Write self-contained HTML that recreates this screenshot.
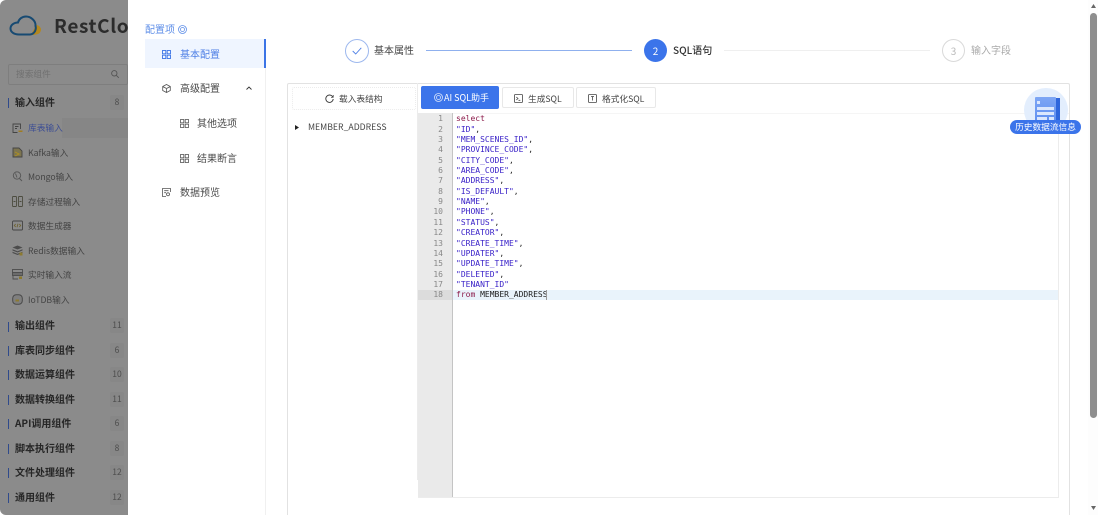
<!DOCTYPE html>
<html lang="zh"><head><meta charset="utf-8"><title>RestCloud</title>
<style>
html,body{margin:0;padding:0;width:1098px;height:515px;overflow:hidden;background:#fff}
#root{position:absolute;left:0;top:0;width:1098px;height:515px;overflow:hidden;filter:blur(.35px);font-family:"Noto Sans CJK SC","Liberation Sans",sans-serif;color:#444}
.a{position:absolute;white-space:nowrap}
svg{position:absolute;overflow:visible}
#side{position:absolute;left:0;top:0;width:128px;height:515px;background:#8b8b8b;overflow:hidden;border-radius:6px 0 0 6px}
.gh{position:absolute;left:15px;font-size:10px;font-weight:700;color:#262626;line-height:14px;white-space:nowrap}
.bar{position:absolute;left:8px;width:1px;height:10px;background:#2f4a8c}
.bd{position:absolute;left:110px;width:14px;height:15px;background:#878787;color:#4d4d4d;font-size:8.5px;line-height:15px;text-align:center;border-radius:2px}
.it{position:absolute;left:28px;font-size:8.7px;color:#444;line-height:12px;white-space:nowrap}
.si{left:12px}
.mi{position:absolute;font-size:10px;color:#4a4a4a;line-height:14px;white-space:nowrap}
.gi{position:absolute;width:9px;height:9px}
.cd{position:absolute;left:456px;font-family:"DejaVu Sans Mono","Liberation Mono",monospace;font-size:8px;line-height:10.35px;color:#1d1d1d;white-space:pre}
.s{color:#3a22c8}.k{color:#8b1a4a}
.ln{position:absolute;left:419px;width:24px;text-align:right;font-family:"DejaVu Sans Mono","Liberation Mono",monospace;font-size:8px;line-height:10.35px;color:#888;white-space:pre}
.btn{position:absolute;top:87px;height:21px;background:#fff;border:1px solid #e8e8e8;border-radius:2px;box-sizing:border-box;font-size:8.7px;line-height:22px;color:#444}
</style></head><body><div id="root">

<div id="side">
<svg style="left:9px;top:14px" width="34" height="24" viewBox="0 0 34 24"><path d="M22 21 C28 21 32 20 32 15 C31 12 29 11 27 11 L22 21Z" fill="#b4881e"/><path d="M10 20.500 H21 C26 20 27.500 15 26.500 12 C27 7 22 2.500 17 2.500 C13 2.500 10 5 9 8.500 C5 8.500 1.500 11 1.500 14.500 C1.500 18 5 20.500 10 20.500Z" fill="none" stroke="#174a72" stroke-width="2"/></svg>
<div class="a" style="left:54px;top:13px;font-size:19px;font-weight:700;color:#2c2c2c;line-height:26px;letter-spacing:.6px">RestCloud</div>

<div style="position:absolute;left:8px;top:64px;height:21px;width:120px;border:1px solid #7e7e7e;box-sizing:border-box;border-radius:2px"></div>
<div class="a" style="left:16px;top:68px;font-size:8.7px;color:#707070;line-height:12px">搜索组件</div>
<svg style="left:111px;top:70px" width="8" height="8" viewBox="0 0 8 8"><circle cx="3.300" cy="3.300" r="2.700" fill="none" stroke="#555" stroke-width=".9"/><path d="M5.300 5.300 L7.800 7.800" stroke="#555" stroke-width=".9"/></svg>

<div class="bar" style="top:98px"></div><div class="gh" style="top:95px">输入组件</div><div class="bd" style="top:95px">8</div>

<div style="position:absolute;left:62px;top:118px;width:66px;height:20px;background:#868686"></div>
<svg class="si" style="top:123px" width="11" height="11" viewBox="0 0 11 11" fill="none" stroke="#444" stroke-width=".9"><path d="M8.500 6 V1 H1 V9.500 H5.500 M3 3.500 H6.500 M3 5.500 H5"/><path d="M6.500 8.300 H10.500" stroke="#a07c20" stroke-width="1.500"/></svg>
<div class="it" style="top:122px;color:#3e4f94">库表输入</div>
<svg class="si" style="top:147px" width="11" height="11" viewBox="0 0 11 11" fill="none" stroke="#444" stroke-width=".9"><path d="M1 1 H7 L10 4 V10 H1Z" fill="#7d7550"/><path d="M3 5 L7 7 L3 9" stroke="#b09020"/></svg>
<div class="it" style="top:147px">Kafka输入</div>
<svg class="si" style="top:171px" width="11" height="11" viewBox="0 0 11 11" fill="none" stroke="#555" stroke-width=".9"><circle cx="5" cy="4.500" r="3.700"/><path d="M7.500 7.500 L10 10 M3.500 2.500 L5 6.500"/></svg>
<div class="it" style="top:171px">Mongo输入</div>
<svg class="si" style="top:196px" width="11" height="11" viewBox="0 0 11 11" fill="none" stroke="#4d4d40" stroke-width=".9"><rect x=".5" y=".5" width="4" height="10" rx=".6"/><rect x="6.500" y=".5" width="4" height="10" rx=".6"/><path d="M1.500 5.500 H3.500 M7.500 5.500 H9.500"/></svg>
<div class="it" style="top:196px">存储过程输入</div>
<svg class="si" style="top:220px" width="11" height="11" viewBox="0 0 11 11" fill="none" stroke="#444" stroke-width=".9"><rect x=".5" y="1" width="10" height="9" rx="1"/><path d="M3.700 4 L2.300 5.500 L3.700 7 M7.300 4 L8.700 5.500 L7.300 7 M6 3.700 L5 7.300" stroke="#6e6230"/></svg>
<div class="it" style="top:220px">数据生成器</div>
<svg class="si" style="top:245px" width="11" height="11" viewBox="0 0 11 11" fill="#4c4c4c"><path d="M5.500 .5 L10.500 2.500 L5.500 4.500 L.5 2.500Z M.5 4.300 L5.500 6.300 L10.500 4.300 V5.500 L5.500 7.500 L.5 5.500Z M.5 6.800 L5.500 8.800 L10.500 6.800 V8 L5.500 10 L.5 8Z"/><rect x="7.500" y="7.500" width="3" height="3" fill="#8c7a30"/></svg>
<div class="it" style="top:245px">Redis数据输入</div>
<svg class="si" style="top:269px" width="11" height="11" viewBox="0 0 11 11" fill="none" stroke="#4d4d4d" stroke-width=".9"><rect x=".5" y=".5" width="10" height="3"/><rect x=".5" y="3.500" width="10" height="3" fill="#6b6b6b"/><path d="M1 6.500 V10 H6"/><rect x="7" y="7.500" width="3" height="2.500" fill="#8c7a30" stroke="none"/></svg>
<div class="it" style="top:269px">实时输入流</div>
<svg class="si" style="top:294px" width="11" height="11" viewBox="0 0 11 11" fill="none" stroke="#4a4a4a" stroke-width="1"><rect x=".7" y=".7" width="9.600" height="9.600" rx="3.500" fill="#7f7f7f"/><path d="M3.500 5.500 H7 V7.500 H3.500Z" fill="#8c7a30" stroke="none"/></svg>
<div class="it" style="top:294px">IoTDB输入</div>

<div class="bar" style="top:322px"></div><div class="gh" style="top:318px">输出组件</div><div class="bd" style="top:318px">11</div>
<div class="bar" style="top:346px"></div><div class="gh" style="top:343px">库表同步组件</div><div class="bd" style="top:343px">6</div>
<div class="bar" style="top:370px"></div><div class="gh" style="top:367px">数据运算组件</div><div class="bd" style="top:367px">10</div>
<div class="bar" style="top:395px"></div><div class="gh" style="top:392px">数据转换组件</div><div class="bd" style="top:392px">11</div>
<div class="bar" style="top:419px"></div><div class="gh" style="top:416px">API调用组件</div><div class="bd" style="top:416px">6</div>
<div class="bar" style="top:444px"></div><div class="gh" style="top:441px">脚本执行组件</div><div class="bd" style="top:441px">8</div>
<div class="bar" style="top:468px"></div><div class="gh" style="top:465px">文件处理组件</div><div class="bd" style="top:465px">12</div>
<div class="bar" style="top:493px"></div><div class="gh" style="top:490px">通用组件</div><div class="bd" style="top:490px">12</div>
</div>

<!-- config nav -->
<div class="a" style="left:145px;top:22px;font-size:10px;color:#5f8fe8;line-height:14px">配置项</div>
<svg style="left:178px;top:25px" width="9" height="9" viewBox="0 0 9 9"><circle cx="4.500" cy="4.500" r="4" fill="none" stroke="#5f8fe8" stroke-width=".8"/><circle cx="4.500" cy="4.500" r="2" fill="none" stroke="#5f8fe8" stroke-width=".8"/></svg>
<div style="position:absolute;left:145px;top:39px;width:120px;height:29px;background:#eff5ff"></div>
<div style="position:absolute;left:264px;top:39px;width:2px;height:29px;background:#3b74e6"></div>
<div style="position:absolute;left:265px;top:68px;width:1px;height:447px;background:#f0f0f0"></div>

<svg class="gi" style="left:162px;top:50px" viewBox="0 0 9 9" fill="none" stroke="#3b74e6" stroke-width=".9"><rect x=".5" y=".5" width="3.300" height="3.300"/><rect x="5.200" y=".5" width="3.300" height="3.300"/><rect x=".5" y="5.200" width="3.300" height="3.300"/><rect x="5.200" y="5.200" width="3.300" height="3.300"/></svg>
<div class="mi" style="left:180px;top:47px;color:#4f80e6">基本配置</div>

<svg class="gi" style="left:162px;top:84px" viewBox="0 0 9 9" fill="none" stroke="#555" stroke-width=".8"><path d="M4.500 .5 L8.300 2.500 V6.500 L4.500 8.500 L.7 6.500 V2.500Z M.7 2.500 L4.500 4.500 L8.300 2.500 M4.500 4.500 V8.500"/></svg>
<div class="mi" style="left:180px;top:81px">高级配置</div>
<svg style="left:246px;top:86px" width="6" height="4" viewBox="0 0 6 4"><path d="M.5 3.500 L3 1 L5.500 3.500" fill="none" stroke="#333" stroke-width=".9"/></svg>

<svg class="gi" style="left:180px;top:119px" viewBox="0 0 9 9" fill="none" stroke="#555" stroke-width=".8"><rect x=".5" y=".5" width="3.300" height="3.300"/><rect x="5.200" y=".5" width="3.300" height="3.300"/><rect x=".5" y="5.200" width="3.300" height="3.300"/><rect x="5.200" y="5.200" width="3.300" height="3.300"/></svg>
<div class="mi" style="left:197px;top:116px">其他选项</div>
<svg class="gi" style="left:180px;top:154px" viewBox="0 0 9 9" fill="none" stroke="#555" stroke-width=".8"><rect x=".5" y=".5" width="3.300" height="3.300"/><rect x="5.200" y=".5" width="3.300" height="3.300"/><rect x=".5" y="5.200" width="3.300" height="3.300"/><rect x="5.200" y="5.200" width="3.300" height="3.300"/></svg>
<div class="mi" style="left:197px;top:151px">结果断言</div>
<svg class="gi" style="left:162px;top:188px" viewBox="0 0 9 9" fill="none" stroke="#555" stroke-width=".8"><path d="M8.500 4 V.5 H.5 V8.500 H4 M2.200 2.700 H6.500 M2.200 4.700 H4"/><circle cx="6" cy="6.300" r="1.500"/></svg>
<div class="mi" style="left:180px;top:185px">数据预览</div>

<!-- steps -->
<div style="position:absolute;left:345px;top:39px;width:24px;height:24px;box-sizing:border-box;border:1px solid #9db8ee;border-radius:50%"></div>
<svg style="left:352px;top:47px" width="10" height="8" viewBox="0 0 10 8"><path d="M.7 4 L3.700 7 L9.300 .8" fill="none" stroke="#4f80e6" stroke-width=".9"/></svg>
<div class="a" style="left:374px;top:43px;font-size:10px;color:#444;line-height:14px">基本属性</div>
<div style="position:absolute;left:426px;top:50px;width:206px;height:1px;background:#8fb0ee"></div>
<div style="position:absolute;left:644px;top:39px;width:23px;height:23px;border-radius:50%;background:#3b74ea;color:#fff;font-size:10px;line-height:23px;text-align:center">2</div>
<div class="a" style="left:673px;top:43px;font-size:10px;font-weight:500;color:#333;line-height:14px">SQL语句</div>
<div style="position:absolute;left:724px;top:50px;width:206px;height:1px;background:#efefef"></div>
<div style="position:absolute;left:942px;top:39px;width:23px;height:23px;box-sizing:border-box;border:1px solid #d9d9d9;border-radius:50%;color:#bbb;font-size:10px;line-height:21px;text-align:center">3</div>
<div class="a" style="left:971px;top:43px;font-size:10px;color:#aaa;line-height:14px">输入字段</div>

<!-- panel -->
<div style="position:absolute;left:287px;top:83px;width:783px;height:432px;box-sizing:border-box;border:1px solid #e2e2e2;border-bottom:0;border-radius:2px 2px 0 0"></div>
<div style="position:absolute;left:417px;top:113px;width:652px;height:1px;background:#f5f5f5"></div>
<div style="position:absolute;left:292px;top:87px;width:124px;height:23px;box-sizing:border-box;border:1px dotted #ececec;border-radius:2px"></div>
<svg style="left:325px;top:94px" width="9" height="9" viewBox="0 0 9 9"><path d="M7.800 3 A3.700 3.700 0 1 0 8.200 5" fill="none" stroke="#333" stroke-width=".9"/><path d="M8.200 1 V3.300 H6" fill="none" stroke="#333" stroke-width=".7"/></svg>
<div class="a" style="left:339px;top:93px;font-size:8.7px;color:#444;line-height:12px">载入表结构</div>
<svg style="left:295px;top:125px" width="4" height="5" viewBox="0 0 4 5"><path d="M0 0 L4 2.500 L0 5Z" fill="#222"/></svg>
<div class="a" style="left:308px;top:121px;font-size:8.7px;color:#444;line-height:12px">MEMBER_ADDRESS</div>
<div style="position:absolute;left:417px;top:83px;width:1px;height:397px;background:#ececec"></div>

<div style="position:absolute;left:421px;top:86px;width:78px;height:23px;background:#3b74ea;border-radius:2px;color:#fff;font-size:9px;line-height:24px"><span style="position:absolute;left:23px;white-space:nowrap">AI SQL助手</span></div>
<svg style="left:434px;top:93px" width="9" height="9" viewBox="0 0 9 9"><circle cx="4.500" cy="4.500" r="4" fill="none" stroke="#d6e3fb" stroke-width=".8"/><circle cx="4.500" cy="4.500" r="2" fill="none" stroke="#d6e3fb" stroke-width=".8"/></svg>
<div class="btn" style="left:502px;width:72px"><span style="position:absolute;left:25px;white-space:nowrap">生成SQL</span></div>
<svg style="left:514px;top:94px" width="9" height="9" viewBox="0 0 9 9" fill="none" stroke="#444" stroke-width=".8"><rect x=".5" y=".5" width="8" height="8" rx=".8"/><path d="M2.300 3 L4 4.500 L2.300 6 M4.500 6.300 H6.300"/></svg>
<div class="btn" style="left:576px;width:80px"><span style="position:absolute;left:25px;white-space:nowrap">格式化SQL</span></div>
<svg style="left:588px;top:94px" width="9" height="9" viewBox="0 0 9 9" fill="none" stroke="#444" stroke-width=".8"><rect x=".5" y=".5" width="8" height="8" rx=".8"/><path d="M3 2.500 H6 M4.500 2.500 V6.500"/></svg>

<!-- editor -->
<div style="position:absolute;left:418px;top:113px;width:641px;height:385px;box-sizing:border-box;border-bottom:1px solid #ececec;border-right:1px solid #ececec"></div>
<div style="position:absolute;left:418px;top:113px;width:35px;height:384px;box-sizing:border-box;background:#eaeaea;border-right:1px solid #c4c4c4"></div>
<div style="position:absolute;left:453px;top:290px;width:605px;height:10px;background:#e9f3fb"></div>
<div style="position:absolute;left:418px;top:290px;width:34px;height:10px;background:#dcdcdc"></div>
<div class="ln" style="top:114.4px">1
2
3
4
5
6
7
8
9
10
11
12
13
14
15
16
17
18</div>
<div class="cd" style="top:114.4px"><span class="k">select</span>
<span class="s">"ID"</span>,
<span class="s">"MEM_SCENES_ID"</span>,
<span class="s">"PROVINCE_CODE"</span>,
<span class="s">"CITY_CODE"</span>,
<span class="s">"AREA_CODE"</span>,
<span class="s">"ADDRESS"</span>,
<span class="s">"IS_DEFAULT"</span>,
<span class="s">"NAME"</span>,
<span class="s">"PHONE"</span>,
<span class="s">"STATUS"</span>,
<span class="s">"CREATOR"</span>,
<span class="s">"CREATE_TIME"</span>,
<span class="s">"UPDATER"</span>,
<span class="s">"UPDATE_TIME"</span>,
<span class="s">"DELETED"</span>,
<span class="s">"TENANT_ID"</span>
<span class="k">from</span> MEMBER_ADDRESS</div>
<div style="position:absolute;left:546px;top:290px;width:1px;height:10px;background:#999"></div>

<!-- floating -->
<div style="position:absolute;left:1024px;top:88px;width:44px;height:44px;border-radius:50%;background:#e3eefd"></div>
<div style="position:absolute;left:1035px;top:97px;width:21px;height:28px;background:linear-gradient(#7ea6f4,#5d8df0);border-radius:1px"></div>
<div style="position:absolute;left:1056px;top:98px;width:4px;height:26px;background:#2f66dc"></div>
<div style="position:absolute;left:1037px;top:101px;width:3px;height:3px;background:#dbe7fd"></div>
<div style="position:absolute;left:1037px;top:107px;width:17px;height:3px;background:#dbe7fd"></div>
<div style="position:absolute;left:1037px;top:112px;width:17px;height:3px;background:#dbe7fd"></div>
<div style="position:absolute;left:1037px;top:117px;width:10px;height:3px;background:#dbe7fd"></div>
<div style="position:absolute;left:1049px;top:117px;width:5px;height:3px;background:#dbe7fd"></div>
<div style="position:absolute;left:1010px;top:120px;width:71px;height:14px;border-radius:7px;background:#3b74ea;color:#fff;font-size:8.7px;line-height:14px;text-align:center;white-space:nowrap">历史数据流信息</div>

<!-- scrollbar -->
<div style="position:absolute;left:1088px;top:0;width:10px;height:515px;background:#fdfdfd"></div>
<div style="position:absolute;left:1089.5px;top:13px;width:7px;height:405px;border-radius:4px;background:#8e8e8e"></div>
<svg style="left:1091px;top:4px" width="5" height="4" viewBox="0 0 5 4"><path d="M0 4 L2.500 0 L5 4Z" fill="#666"/></svg>
<svg style="left:1091px;top:506px" width="5" height="4" viewBox="0 0 5 4"><path d="M0 0 L2.500 4 L5 0Z" fill="#666"/></svg>
</div></body></html>
